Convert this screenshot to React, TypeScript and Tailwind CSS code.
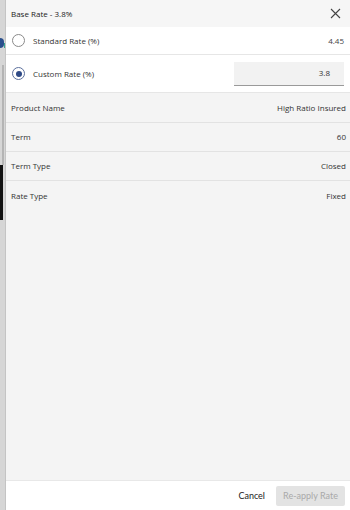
import React from "react";

const rows = [
  { label: "Product Name", value: "High Ratio Insured" },
  { label: "Term", value: "60" },
  { label: "Term Type", value: "Closed" },
  { label: "Rate Type", value: "Fixed" },
];

function Radio({ checked }: { checked?: boolean }) {
  return (
    <span
      className={
        "flex h-[13px] w-[13px] items-center justify-center rounded-full border bg-white " +
        (checked ? "border-[#5b6f9c]" : "border-[#8a8a8a]")
      }
    >
      {checked && <span className="h-[6px] w-[6px] rounded-full bg-[#2f4a86]" />}
    </span>
  );
}

export default function App() {
  return (
    <div
      className="flex h-[510px] w-[350px] bg-white text-[#333]"
      style={{ fontFamily: '"Open Sans", "Liberation Sans", sans-serif' }}
    >
      {/* dimmed page behind the drawer */}
      <div className="relative flex w-[6px] flex-col bg-[#d6d6d6]">
        <div className="h-[38px]" />
        <div className="flex h-[10px] items-end">
          <div className="h-[10px] w-[4px] rounded-r-full bg-[#2a4f8c]" />
          <div className="h-[5px] w-[1px] bg-[#3aa58f]" />
        </div>
        <div className="h-[17px]" />
        <div className="ml-[2px] h-[100px] w-[2px] bg-[#b4b4b4]" />
        <div className="h-[55px] w-[3px] bg-[#111]" />
        <div className="h-[290px]" />
        <div className="absolute right-0 top-0 h-full w-[1px] bg-[#c4c4c4]" />
      </div>

      <div className="flex flex-1 flex-col">
        <div className="flex h-[27px] items-center justify-between bg-[#f6f6f6] pl-[5px] pr-[8px]">
          <span className="text-[8px] text-[#222]">Base Rate - 3.8%</span>
          <svg width="11" height="11" viewBox="0 0 11 11" className="mr-[1px]">
            <path d="M1 1 L10 10 M10 1 L1 10" stroke="#444" strokeWidth="1.1" />
          </svg>
        </div>

        <div className="flex h-[28px] items-center border-b border-[#e6e6e6] pl-[6px] pr-[6px]">
          <Radio />
          <span className="ml-[8px] text-[8px] text-[#333]">Standard Rate (%)</span>
          <span className="ml-auto text-[8px] text-[#444]">4.45</span>
        </div>

        <div className="flex h-[38px] items-center border-b border-[#e6e6e6] pl-[6px] pr-[6px]">
          <Radio checked />
          <span className="ml-[8px] text-[8px] text-[#333]">Custom Rate (%)</span>
          <div className="ml-auto flex h-[24px] w-[110px] items-center justify-end border-b border-[#9a9a9a] bg-[#f2f2f2] pr-[14px] text-[8px] text-[#333]">
            3.8
          </div>
        </div>

        <div className="flex flex-1 flex-col bg-[#f4f4f4] pt-[1px]">
          {rows.map((r, i) => (
            <div
              key={r.label}
              className={
                "flex h-[29px] items-center justify-between pl-[5px] pr-[4px] text-[8px] text-[#333] " +
                (i < rows.length - 1 ? "border-b border-[#e2e2e2]" : "")
              }
            >
              <span>{r.label}</span>
              <span>{r.value}</span>
            </div>
          ))}
        </div>

        <div
          className="flex h-[30px] items-center justify-end gap-[11px] border-t border-[#e8e8e8] bg-white pr-[5px]"
          style={{ fontFamily: 'Lato, "Open Sans", sans-serif' }}
        >
          <span className="text-[9px] text-[#222]">Cancel</span>
          <button className="h-[20px] w-[69px] rounded-[2px] bg-[#e3e3e3] text-[9px] text-[#a9a9a9]">
            Re-apply Rate
          </button>
        </div>
      </div>
    </div>
  );
}
